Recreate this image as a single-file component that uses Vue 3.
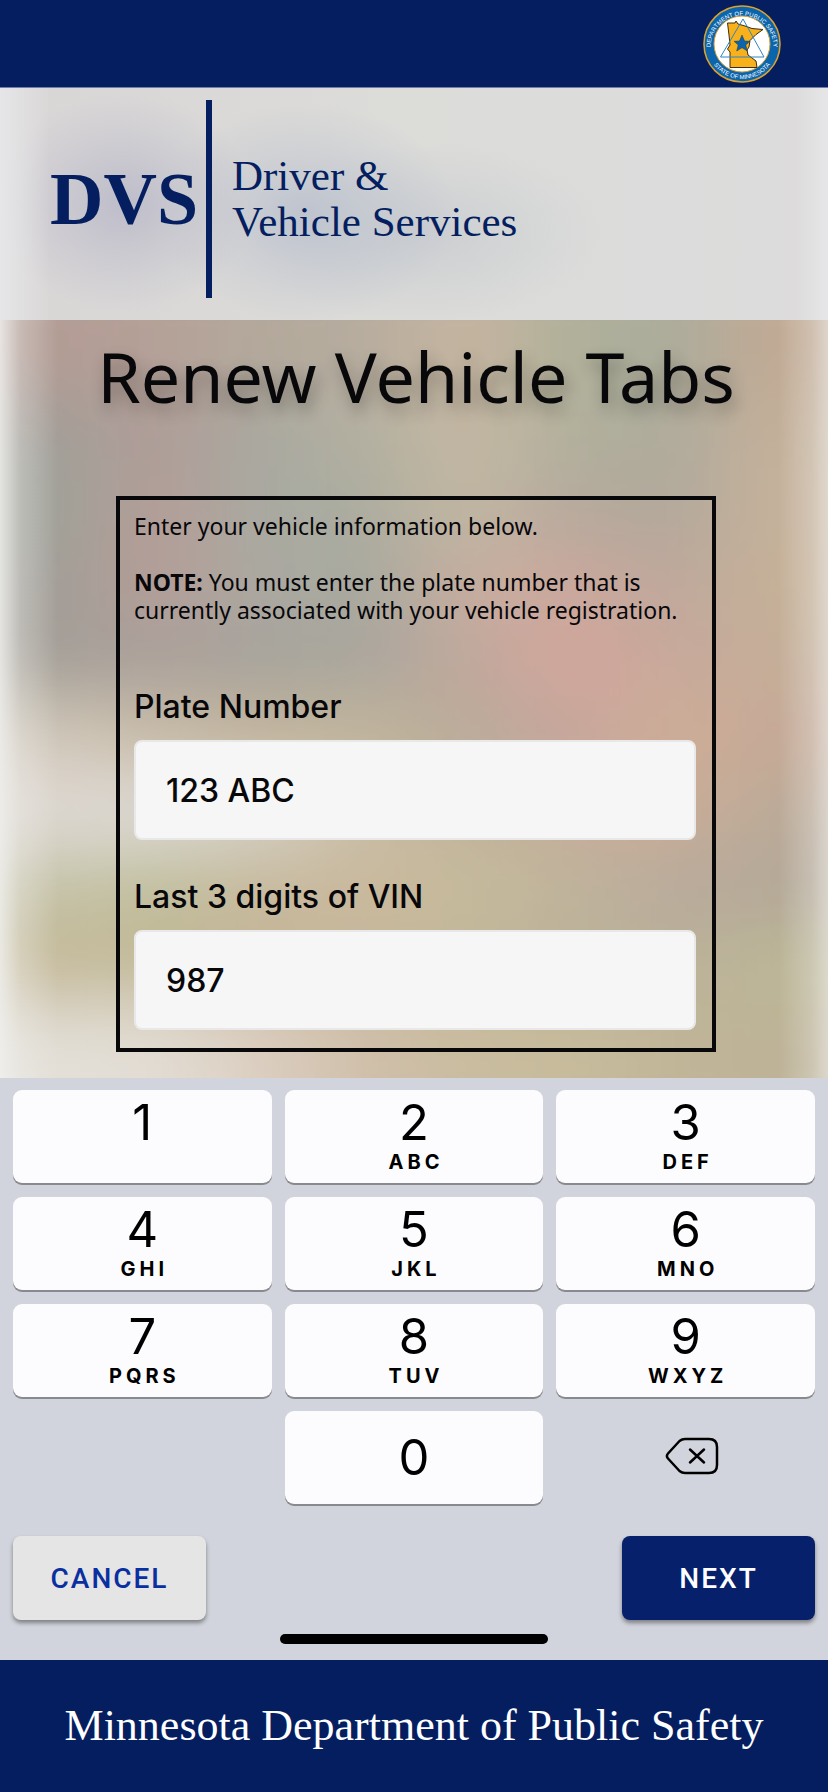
<script setup>
import { ref } from 'vue'

const plate = ref('123 ABC')
const vin = ref('987')

const keys = [
  { digit: '1', letters: '' },
  { digit: '2', letters: 'ABC' },
  { digit: '3', letters: 'DEF' },
  { digit: '4', letters: 'GHI' },
  { digit: '5', letters: 'JKL' },
  { digit: '6', letters: 'MNO' },
  { digit: '7', letters: 'PQRS' },
  { digit: '8', letters: 'TUV' },
  { digit: '9', letters: 'WXYZ' },
]

// Colour cells of the soft backdrop, row by row
const cells = [
  'b39c95 b5a098 b4a99b b5ac9f c8b5a1 afb09a abac9c c2aa94',
  'a19f99 b09c97 a8a8a0 b3b0a0 c5b8a4 b1b09c adab9c c5b09a',
  '9da29a b69c96 a7aaa2 aaac9f c2b7a3 b5a99e b0a89b c7b29b',
  'a19f99 b59c96 aba9a1 a6a99f c6ae9f cda89d bda79b c6b198',
  'a39f97 aaa09b a6a39c a9a69e c0a89d d4a59c c8a99b c5af99',
  'd2c9bb c9bca6 c4b69c c2b69b b8ab99 c6a69d cfae96 c6a997',
  'e0dad5 dedbd7 d7d1c8 c9bda6 bfb29c c5ac9a cbad98 b9aa98',
  'c5c3a8 bfbe9a c6ba9c cab99d c6bc9b bfb49b b8aa9b b4a799',
  'c5b896 c1b996 c6b398 c5b69a c2b69a bcb198 bbb19a bcb896',
  'e3e0d8 e3ddd4 dccfc1 d0bfaa c9bc9f c7bc9c c1b598 bdb297',
].map((row) => row.split(' ').map((c) => '#' + c))

function cellX(i) { return i === 0 ? -10 : i * 10 }
function cellY(j) { return j === 0 ? -10 : j * 10 }
function cellW(i) { return i === 0 || i === 7 ? 20 : 10 }
function cellH(j) { return j === 0 || j === 9 ? 20 : 10 }

function press(digit) {
  if (vin.value.length < 3) vin.value += digit
}
function erase() {
  vin.value = vin.value.slice(0, -1)
}
</script>

<template>
  <div class="page">
    <header class="topbar">
      <svg class="seal" viewBox="0 0 80 80" role="img" aria-label="Department of Public Safety seal">
        <defs>
          <path id="arc-top" d="M8.500 43 A31.500 31.500 0 1 1 71.500 43" />
          <path id="arc-bottom" d="M5 40 A35 35 0 0 0 75 40" />
        </defs>
        <circle cx="40" cy="40" r="39" fill="#2c2a22" />
        <circle cx="40" cy="40" r="38" fill="#0b65ac" stroke="#d9a136" stroke-width="1.500" />
        <circle cx="40" cy="40" r="28" fill="#fff" stroke="#d9a136" stroke-width="1" />
        <path d="M25.500 19 L33 19 L34 17 L36 20 L43 22 L50 24.500 L61 25.500 L54 30.500 L48 36.500 L47 43 L45 46 L46 51 L54 57 L55 63.500 L28 63.500 L28 48 L25.500 45 L28 41 L27 31 Z" fill="#f9b11b" stroke="#3d2d10" stroke-width="1" />
        <path d="M41 15 L62 53 L18.500 53 Z" fill="none" stroke="#2e86c4" stroke-width="1" />
        <path d="M40 31 L42.600 37 L48 37.300 L43.800 41 L45.300 47 L40 43.700 L34.700 47 L36.200 41 L32 37.300 L37.400 37 Z" fill="#0b65ac" stroke="#173a5c" stroke-width="0.500" />
        <text class="seal-text"><textPath href="#arc-top" startOffset="50%" text-anchor="middle">DEPARTMENT OF PUBLIC SAFETY</textPath></text>
        <text class="seal-text"><textPath href="#arc-bottom" startOffset="50%" text-anchor="middle">STATE OF MINNESOTA</textPath></text>
      </svg>
    </header>

    <section class="brand">
      <div class="brand-mark">DVS</div>
      <div class="brand-rule"></div>
      <div class="brand-name">Driver &amp;<br />Vehicle Services</div>
    </section>

    <main class="content">
      <svg class="backdrop" viewBox="0 0 80 100" preserveAspectRatio="none" aria-hidden="true">
        <defs>
          <filter id="soft" x="-10%" y="-10%" width="120%" height="120%">
            <feGaussianBlur stdDeviation="4.500" />
          </filter>
        </defs>
        <rect x="-10" y="-10" width="100" height="120" fill="#bdb09c" />
        <g filter="url(#soft)">
          <template v-for="(row, j) in cells" :key="j">
            <rect v-for="(c, i) in row" :key="i" :x="cellX(i)" :y="cellY(j)" :width="cellW(i)" :height="cellH(j)" :fill="c" />
          </template>
        </g>
      </svg>

      <h1>Renew Vehicle Tabs</h1>

      <form class="panel" @submit.prevent>
        <p>Enter your vehicle information below.</p>
        <p><strong>NOTE:</strong> You must enter the plate number that is currently associated with your vehicle registration.</p>
        <div class="field first">
          <label for="plate">Plate Number</label>
          <input id="plate" v-model="plate" type="text" />
        </div>
        <div class="field">
          <label for="vin">Last 3 digits of VIN</label>
          <input id="vin" v-model="vin" type="text" inputmode="numeric" />
        </div>
      </form>
    </main>

    <section class="keyboard">
      <div class="keys">
        <button v-for="k in keys" :key="k.digit" type="button" class="key" @click="press(k.digit)">
          <span class="digit">{{ k.digit }}</span>
          <span class="letters">{{ k.letters }}</span>
        </button>
        <button type="button" class="key zero" @click="press('0')"><span class="digit">0</span></button>
        <button type="button" class="erase" aria-label="Delete" @click="erase">
          <svg viewBox="0 0 54 38" fill="none" stroke="#000" stroke-linecap="round" stroke-linejoin="round">
            <path stroke-width="2.500" d="M20 2 H44 Q52 2 52 10 V28 Q52 36 44 36 H20 Q17 36 14.500 34 L3 21.500 Q0.800 19 3 16.500 L14.500 4 Q17 2 20 2 Z" />
            <path stroke-width="2.500" d="M25 12.500 L39 25.500 M39 12.500 L25 25.500" />
          </svg>
        </button>
      </div>
      <div class="actions">
        <button type="button" class="action cancel">CANCEL</button>
        <button type="button" class="action next">NEXT</button>
      </div>
      <div class="home"></div>
    </section>

    <footer class="footer">Minnesota Department of Public Safety</footer>
  </div>
</template>

<style>
body {
  background: #041e60;
}
</style>

<style scoped>
.page {
  display: flex;
  flex-direction: column;
  min-height: 100vh;
  color: #08070a;
}
.topbar {
  display: flex;
  justify-content: flex-end;
  align-items: center;
  height: 88px;
  padding: 0 46px;
  box-sizing: border-box;
  background: #041e60;
  border-bottom: 1px solid #6f7ea8;
}
.seal {
  width: 80px;
  height: 80px;
}
.seal-text {
  font-family: "Liberation Sans", Arial, sans-serif;
  font-size: 6px;
  fill: #fff;
}
.brand {
  display: flex;
  align-items: center;
  height: 232px;
  padding: 0 50px 10px;
  box-sizing: border-box;
  color: #041e60;
  font-family: "Liberation Serif", "Times New Roman", serif;
  background:
    linear-gradient(90deg, rgba(230, 230, 232, 1), rgba(230, 230, 232, 0) 6%, rgba(230, 230, 232, 0) 96%, rgba(230, 230, 232, 1)),
    radial-gradient(ellipse 130px 110px at 124px 115px, rgba(184, 184, 200, 0.85), rgba(184, 184, 200, 0.4) 50%, rgba(184, 184, 200, 0)),
    radial-gradient(ellipse 150px 110px at 305px 125px, rgba(182, 189, 204, 0.75), rgba(182, 189, 204, 0.35) 50%, rgba(182, 189, 204, 0)),
    radial-gradient(ellipse 180px 90px at 420px 145px, rgba(196, 200, 206, 0.7), rgba(196, 200, 206, 0)),
    linear-gradient(90deg, #d9d6d6, #dcdcd9 50%, #dbdcdb 80%, #dddbdb);
}
.brand-mark {
  width: 156px;
  font-size: 74px;
  line-height: 80px;
  font-weight: 700;
}
.brand-rule {
  width: 6px;
  height: 198px;
  background: #041e60;
}
.brand-name {
  margin-left: 20px;
  font-size: 43px;
  line-height: 46px;
}
.content {
  position: relative;
  display: flex;
  flex-direction: column;
  align-items: center;
  padding: 16px 112px 26px 116px;
  overflow: hidden;
}
.backdrop {
  position: absolute;
  inset: 0;
  width: 100%;
  height: 100%;
}
.content::before {
  content: "";
  position: absolute;
  inset: 0;
  z-index: 1;
  background: linear-gradient(90deg, rgba(240, 240, 238, 0.85), rgba(240, 240, 238, 0.35) 2.5%, rgba(240, 240, 238, 0) 7%, rgba(240, 240, 238, 0) 94%, rgba(240, 240, 238, 0.3) 98%, rgba(240, 240, 238, 0.6));
}
h1 {
  position: relative;
  z-index: 2;
  margin: 0 0 80px;
  font-family: "Noto Sans", "Open Sans", sans-serif;
  font-size: 70px;
  line-height: 80px;
  font-weight: 400;
  white-space: nowrap;
  text-shadow: 3px 8px 16px rgba(0, 0, 0, 0.3);
}
.panel {
  position: relative;
  z-index: 2;
  width: 100%;
  max-width: 600px;
  box-sizing: border-box;
  padding: 12px 14px 18px;
  border: 4px solid #08070a;
}
.panel p {
  margin: 0 0 28px;
  font-family: "Noto Sans", "Open Sans", sans-serif;
  font-size: 23px;
  line-height: 28px;
}
.field {
  display: flex;
  flex-direction: column;
  gap: 12px;
  margin-top: 36px;
  margin-right: 2px;
  font-family: Inter, "Liberation Sans", sans-serif;
}
.field.first {
  margin-top: 62px;
}
.field label {
  font-size: 32px;
  line-height: 42px;
  font-weight: 500;
}
.field input {
  width: 100%;
  height: 100px;
  box-sizing: border-box;
  padding: 0 30px;
  border: 2px solid #e8e8e8;
  border-radius: 8px;
  outline: none;
  background: #f6f6f6;
  color: #08070a;
  font-family: inherit;
  font-size: 32px;
  font-weight: 500;
}
.keyboard {
  padding: 12px 13px 16px;
  background: #d1d4dc;
}
.keys {
  display: grid;
  grid-template-columns: repeat(3, 1fr);
  grid-auto-rows: 93px;
  gap: 14px 13px;
}
.key {
  display: flex;
  flex-direction: column;
  align-items: center;
  padding: 6px 0 0;
  border: 0;
  border-radius: 9px;
  background: #fcfcfe;
  color: #000;
  font-family: Inter, "Liberation Sans", sans-serif;
  box-shadow: 0 2px 0 #898a8d;
}
.digit {
  font-size: 49px;
  line-height: 54px;
}
.letters {
  padding-left: 4px;
  font-size: 20px;
  line-height: 24px;
  font-weight: 700;
  letter-spacing: 4px;
}
.zero {
  grid-column: 2;
  justify-content: center;
  padding: 0;
}
.erase {
  display: flex;
  align-items: center;
  justify-content: center;
  padding: 0 0 4px 12px;
  border: 0;
  background: none;
}
.erase svg {
  width: 54px;
  height: 38px;
}
.actions {
  display: flex;
  justify-content: space-between;
  margin-top: 32px;
}
.action {
  width: 193px;
  height: 84px;
  padding: 0;
  border: 0;
  border-radius: 8px;
  font-family: Roboto, "Liberation Sans", sans-serif;
  font-size: 28px;
  font-weight: 500;
  letter-spacing: 2px;
  box-shadow: 0 3px 4px rgba(0, 0, 0, 0.4);
}
.cancel {
  background: #e5e5e5;
  color: #0a2fa0;
}
.next {
  background: #06206c;
  color: #fff;
}
.home {
  width: 268px;
  height: 10px;
  margin: 14px auto 0;
  border-radius: 5px;
  background: #000;
}
.footer {
  flex: 1;
  display: flex;
  align-items: center;
  justify-content: center;
  min-height: 130px;
  background: #041e60;
  color: #fff;
  font-family: "Liberation Serif", "Times New Roman", serif;
  font-size: 44px;
  line-height: 48px;
}
</style>
